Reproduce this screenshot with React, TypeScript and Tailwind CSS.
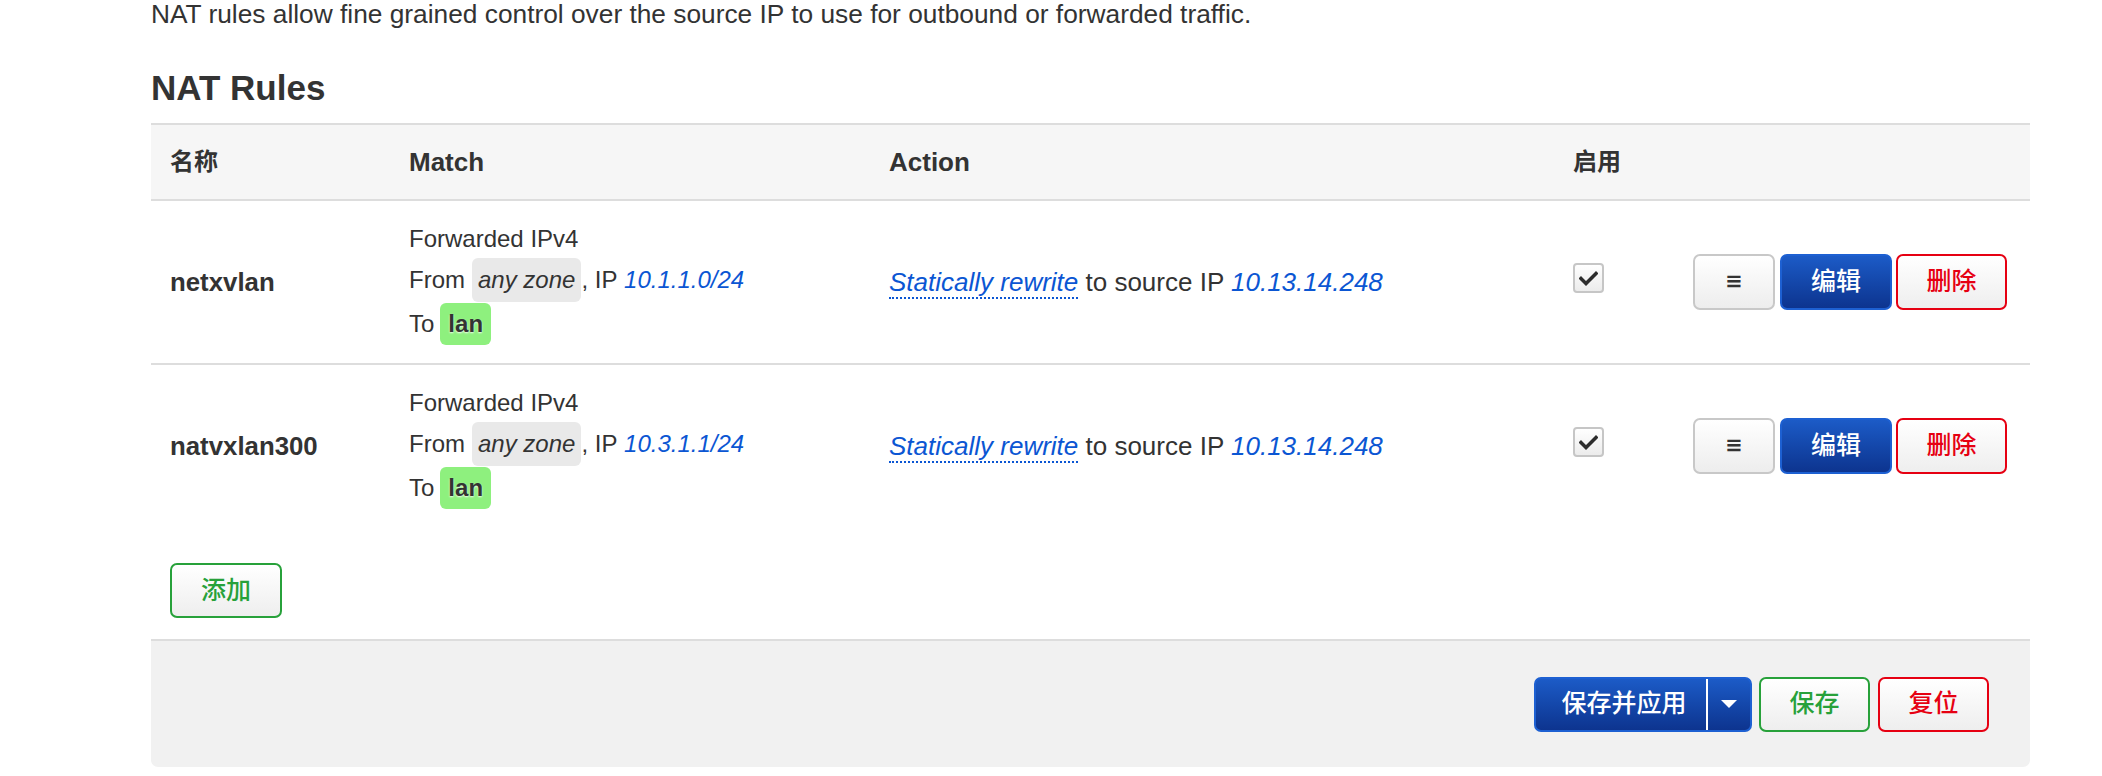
import React from "react";

const rows = [
  { name: "netxvlan", ip: "10.1.1.0/24" },
  { name: "natvxlan300", ip: "10.3.1.1/24" },
];

function Check() {
  return (
    <div className="-mt-[8px] flex h-[30px] w-[31px] items-center justify-center rounded-[4px] border-2 border-[#c6c6c6] bg-gradient-to-b from-[#ffffff] to-[#ececec]">
      <svg width="19" height="15" viewBox="0 0 19 15" fill="none">
        <path d="M2 7.5 L7 12.5 L17 2.5" stroke="#2d2d2d" strokeWidth="3.4" strokeLinecap="square" />
      </svg>
    </div>
  );
}

function Row({ name, ip, last }: { name: string; ip: string; last?: boolean }) {
  return (
    <div
      className={
        "grid grid-cols-[239px_480px_684px_120px_356px] items-center " +
        (last ? "h-[162px]" : "h-[164px] border-b-2 border-[#dddddd]")
      }
    >
      <div className="px-[19px] text-[25.8px] font-bold text-[#333333]">{name}</div>
      <div className="flex flex-col px-[19px] text-[24px] text-[#333333]">
        <div className="flex h-[38px] items-center">Forwarded IPv4</div>
        <div className="flex h-[44px] items-center">
          <span>From</span>
          <span className="ml-[7px] flex h-[44px] items-center rounded-[6px] bg-[#e9e9e9] px-[6px] italic">any zone</span>
          <span>, IP&nbsp;</span>
          <span className="italic text-[#0b56d3]">{ip}</span>
        </div>
        <div className="mt-[1px] flex h-[42px] items-center">
          <span>To</span>
          <span className="ml-[6px] flex h-[42px] items-center rounded-[6px] bg-[#8ef07e] px-[8px] font-bold [text-shadow:0_1px_2px_rgba(255,255,255,0.9)]">
            lan
          </span>
        </div>
      </div>
      <div className="px-[19px] text-[26px] text-[#333333]">
        <span className="border-b-2 border-dotted border-[#0b56d3] italic text-[#0b56d3]">Statically rewrite</span>
        <span> to source IP </span>
        <span className="italic text-[#0b56d3]">10.13.14.248</span>
      </div>
      <div className="flex items-center px-[19px]">
        <Check />
      </div>
      <div className="flex items-center justify-end gap-[5px] pr-[23px]">
        <button className="flex h-[56px] w-[82px] items-center justify-center rounded-[7px] border-2 border-[#c8c8c8] bg-gradient-to-b from-[#ffffff] to-[#ededed] font-['DejaVu_Sans',sans-serif] text-[21px] font-bold text-[#333333]">
          ≡
        </button>
        <button className="flex h-[56px] w-[112px] items-center justify-center rounded-[7px] border-2 border-[#1d60d2] bg-gradient-to-b from-[#1c5bc7] to-[#0d348f] text-[25px] font-medium text-white">
          编辑
        </button>
        <button className="ml-[-1px] flex h-[56px] w-[111px] items-center justify-center rounded-[7px] border-2 border-[#e60012] bg-gradient-to-b from-[#ffffff] to-[#eeeeee] text-[25px] font-medium text-[#e60012]">
          删除
        </button>
      </div>
    </div>
  );
}

export default function App() {
  return (
    <div className="min-h-[776px] w-[2102px] bg-white pl-[151px] pr-[72px] font-['Liberation_Sans','Noto_Sans_CJK_SC',sans-serif] text-[#333333]">
      <p className="text-[26.3px] leading-[28px]">
        NAT rules allow fine grained control over the source IP to use for outbound or forwarded traffic.
      </p>
      <h2 className="mt-[40px] text-[35px] font-bold leading-[40px]">NAT Rules</h2>
      <div className="mt-[15px]">
        <div className="grid h-[78px] grid-cols-[239px_480px_684px_120px_356px] items-center border-y-2 border-[#dddddd] bg-[#f6f6f6] text-[26px] font-bold">
          <div className="px-[19px] text-[24px]">名称</div>
          <div className="px-[19px]">Match</div>
          <div className="px-[19px]">Action</div>
          <div className="px-[19px] text-[24px]">启用</div>
          <div />
        </div>
        {rows.map((r, i) => (
          <Row key={r.name} name={r.name} ip={r.ip} last={i === rows.length - 1} />
        ))}
        <div className="pb-[21px] pl-[19px] pt-[36px]">
          <button className="flex h-[55px] w-[112px] items-center justify-center rounded-[7px] border-2 border-[#27a13a] bg-gradient-to-b from-[#ffffff] to-[#eeeeee] text-[25px] font-medium text-[#27a13a]">
            添加
          </button>
        </div>
        <div className="flex h-[128px] items-center justify-end gap-[7px] rounded-b-[7px] border-t-2 border-[#dddddd] bg-[#f1f1f1] pr-[41px]">
          <div className="flex h-[55px] w-[218px] items-stretch overflow-hidden rounded-[7px] border-2 border-[#1d60d2] bg-gradient-to-b from-[#1c5bc7] to-[#0d348f] text-[25px] font-medium text-white">
            <div className="flex w-[170px] items-center justify-center pl-[6px]">保存并应用</div>
            <div className="w-[2px] bg-white" />
            <div className="flex flex-1 items-center justify-center">
              <svg width="16" height="8" viewBox="0 0 16 8">
                <path d="M0 0 L16 0 L8 8 Z" fill="#ffffff" />
              </svg>
            </div>
          </div>
          <button className="flex h-[55px] w-[111px] items-center justify-center rounded-[7px] border-2 border-[#27a13a] bg-gradient-to-b from-[#ffffff] to-[#eeeeee] text-[25px] font-medium text-[#27a13a]">
            保存
          </button>
          <button className="ml-[1px] flex h-[55px] w-[111px] items-center justify-center rounded-[7px] border-2 border-[#e60012] bg-gradient-to-b from-[#ffffff] to-[#eeeeee] text-[25px] font-medium text-[#e60012]">
            复位
          </button>
        </div>
      </div>
    </div>
  );
}
